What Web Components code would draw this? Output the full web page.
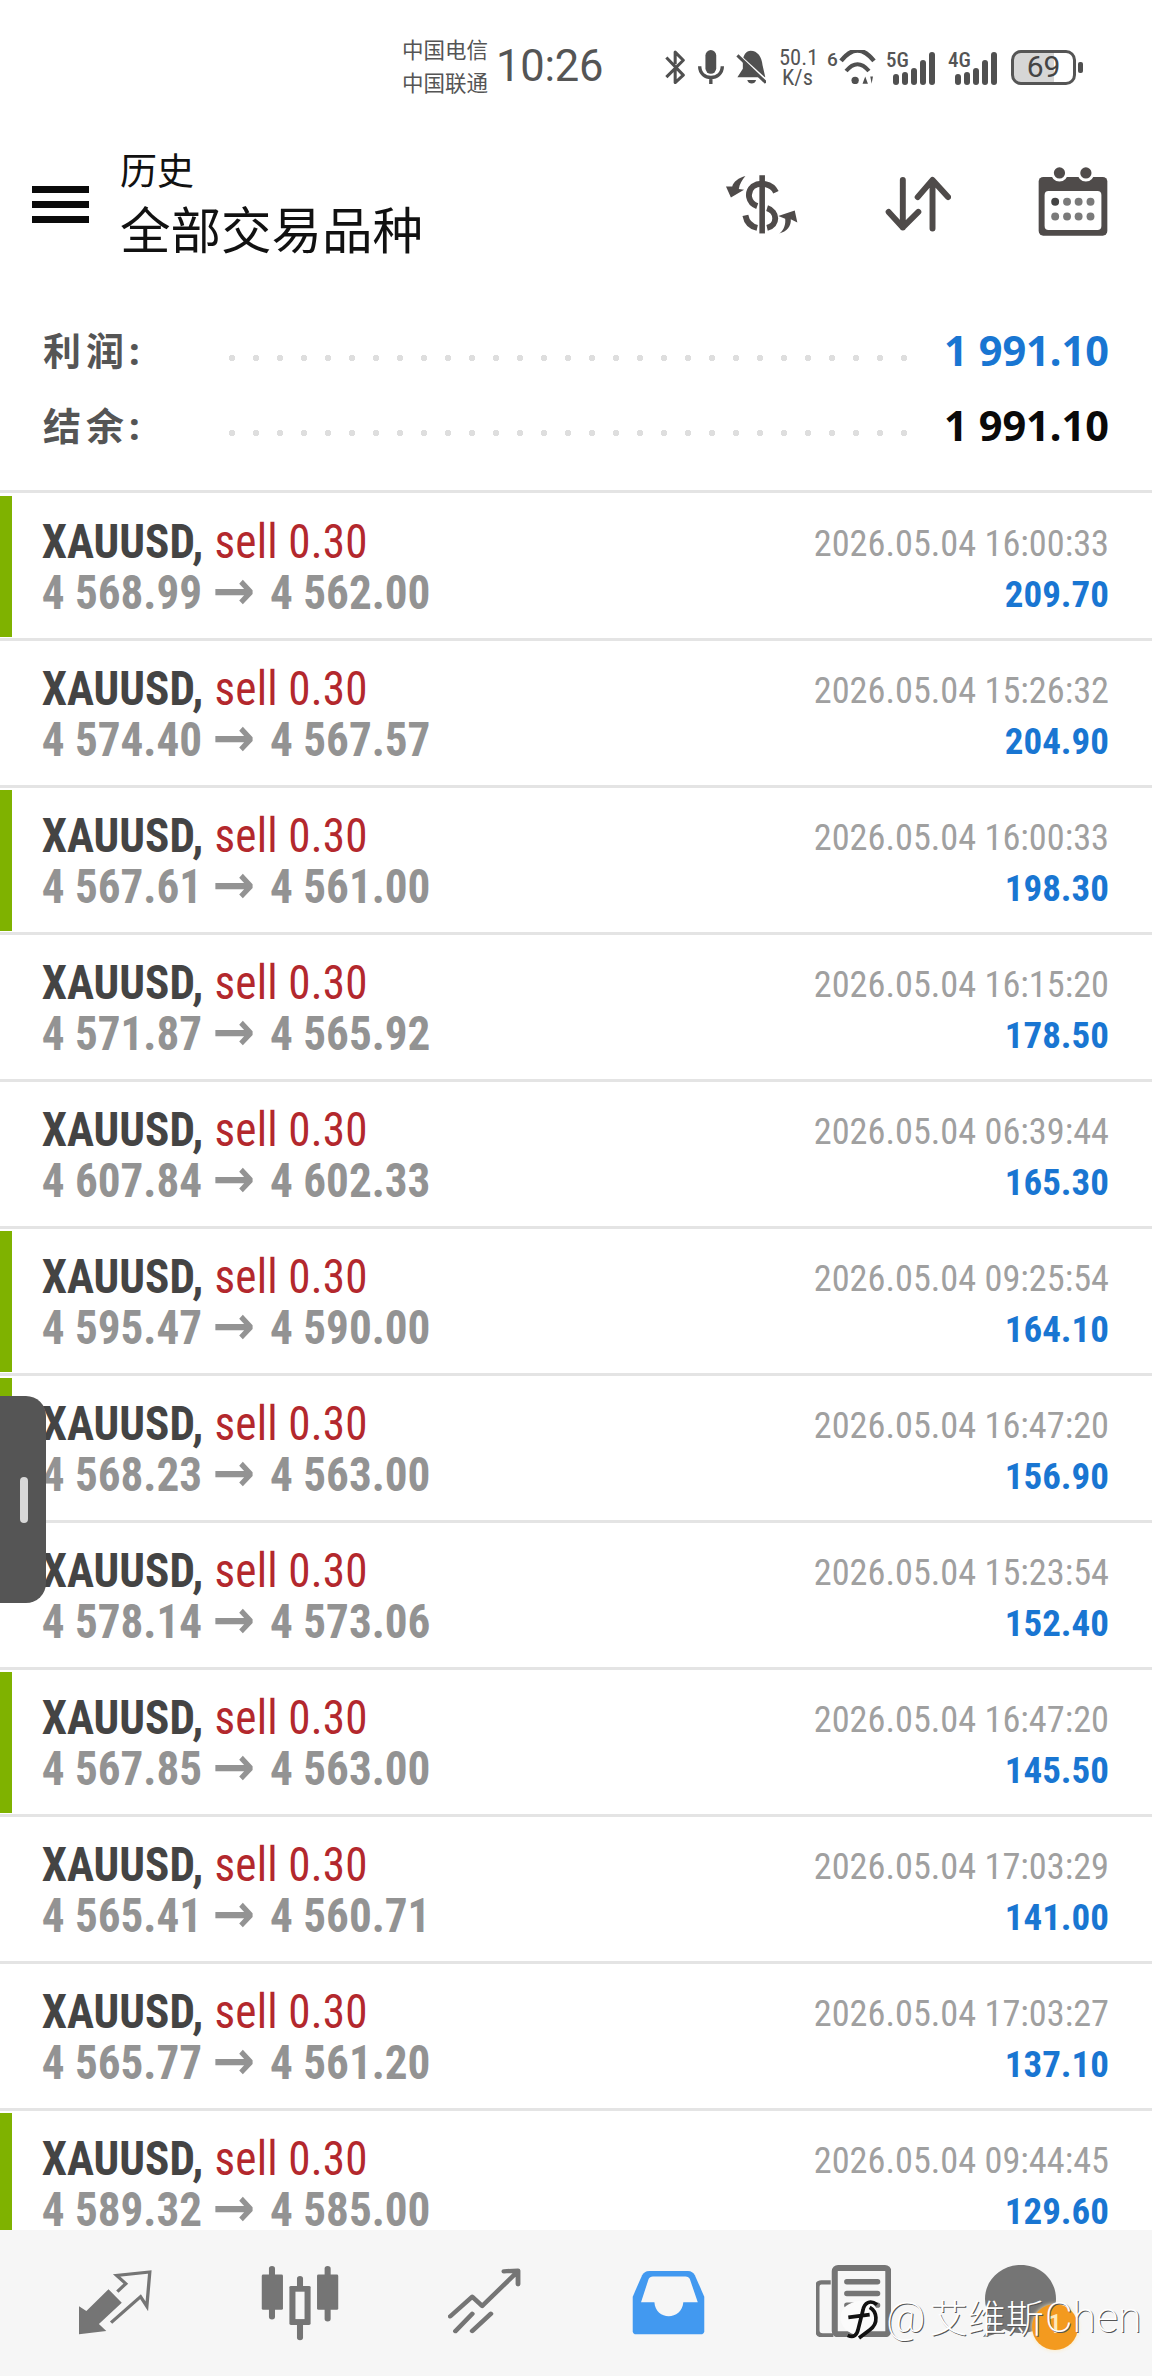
<!DOCTYPE html>
<html>
<head>
<meta charset="utf-8">
<title>历史</title>
<style>
  html, body { margin: 0; padding: 0; background: #fff; }
</style>
</head>
<body>
<history-page>
  <status-bar slot="status"></status-bar>
  <app-header slot="header" kicker="历史" heading="全部交易品种"></app-header>
  <summary-row slot="summary" label="利润:" value="1 991.10" tone="#1976d2"></summary-row>
  <summary-row slot="summary" label="结余:" value="1 991.10" tone="#0a0a0a"></summary-row>
  <trade-row accent open="4 568.99" close="4 562.00" time="2026.05.04 16:00:33" profit="209.70"></trade-row>
  <trade-row open="4 574.40" close="4 567.57" time="2026.05.04 15:26:32" profit="204.90"></trade-row>
  <trade-row accent open="4 567.61" close="4 561.00" time="2026.05.04 16:00:33" profit="198.30"></trade-row>
  <trade-row open="4 571.87" close="4 565.92" time="2026.05.04 16:15:20" profit="178.50"></trade-row>
  <trade-row open="4 607.84" close="4 602.33" time="2026.05.04 06:39:44" profit="165.30"></trade-row>
  <trade-row accent open="4 595.47" close="4 590.00" time="2026.05.04 09:25:54" profit="164.10"></trade-row>
  <trade-row accent open="4 568.23" close="4 563.00" time="2026.05.04 16:47:20" profit="156.90"></trade-row>
  <trade-row open="4 578.14" close="4 573.06" time="2026.05.04 15:23:54" profit="152.40"></trade-row>
  <trade-row accent open="4 567.85" close="4 563.00" time="2026.05.04 16:47:20" profit="145.50"></trade-row>
  <trade-row open="4 565.41" close="4 560.71" time="2026.05.04 17:03:29" profit="141.00"></trade-row>
  <trade-row open="4 565.77" close="4 561.20" time="2026.05.04 17:03:27" profit="137.10"></trade-row>
  <trade-row accent open="4 589.32" close="4 585.00" time="2026.05.04 09:44:45" profit="129.60"></trade-row>
  <bottom-nav slot="nav"></bottom-nav>
</history-page>

<script>
class HistoryPage extends HTMLElement {
  constructor() {
    super();
    this.attachShadow({ mode: "open" });
    this.shadowRoot.innerHTML = `
      <style>
        :host { display: flex; flex-direction: column; position: relative; width: 1152px; height: 2376px; overflow: hidden; background: #fff; }
        .summary { display: flex; flex-direction: column; gap: 35px; height: 170px; padding-top: 10px; box-sizing: border-box; }
        .list { flex: 1; min-height: 0; overflow: hidden; border-top: 3px solid #e4e4e4; padding-top: 1px; }
        .handle { position: absolute; left: 0; top: 1396px; width: 46px; height: 207px; background: #555; border-radius: 0 20px 20px 0; }
        .handle i { position: absolute; left: 20px; top: 81px; width: 8px; height: 46px; border-radius: 4px; background: #d8d8d8; }
        .mark { position: absolute; left: 835px; top: 2292px; display: flex; align-items: center; color: #fff; font: 200 43px/50px Roboto, "Noto Sans CJK SC", sans-serif; text-shadow: 1px 1px 0 #555; white-space: nowrap; }
        .mark svg { display: block; width: 46px; height: 52px; margin-right: 5px; }
        .mark .cn { font-size: 38px; font-weight: 300; margin: 0 1px 0 4px; }
      </style>
      <slot name="status"></slot>
      <slot name="header"></slot>
      <div class="summary"><slot name="summary"></slot></div>
      <div class="list"><slot></slot></div>
      <slot name="nav"></slot>
      <div class="handle"><i></i></div>
      <div class="mark">
        <svg viewBox="100 115 138 130">
          <path d="M185 128C218 128 232 155 230 182C226 212 202 226 178 232L166 247L162 230C128 222 112 196 118 168C124 142 152 128 185 128Z" fill="#fbfbfb"/>
          <path d="M226 140C206 124 188 134 184 156L170 212C166 232 156 240 138 232M140 178L204 170M204 148C226 160 232 196 204 216L172 240" fill="none" stroke="#111" stroke-width="11"/>
        </svg>
        <span>@<span class="cn">艾维斯</span>Chen</span>
      </div>
    `;
  }
}

class StatusBar extends HTMLElement {
  constructor() {
    super();
    this.attachShadow({ mode: "open" });
    this.shadowRoot.innerHTML = `
      <style>
        :host { display: flex; align-items: center; height: 134px; box-sizing: border-box; padding: 0 0 0 402px; color: #555; font-family: Roboto, "Noto Sans CJK SC", sans-serif; }
        svg { display: block; flex: none; fill: #505050; }
        .carrier { width: 95px; font-size: 21.5px; line-height: 33px; white-space: nowrap; }
        .time { width: 168px; margin-left: -1px; font-size: 43.5px; line-height: 50px; letter-spacing: -.2px; }
        .speed { margin-left: 13px; width: 37px; font-size: 22.5px; line-height: 20px; text-align: center; font-stretch: 75%; }
        .six { margin-left: 11px; width: 10px; font-size: 19px; line-height: 19px; font-weight: 500; align-self: flex-start; margin-top: 50px; }
        .net { display: flex; align-items: flex-end; height: 36px; }
        .net b { font-size: 21px; font-weight: 500; line-height: 18px; margin-top: 2px; align-self: flex-start; font-stretch: 75%; width: 23px; margin-right: -16px; }
        .bars { display: flex; align-items: flex-end; gap: 3px; }
        .bars i { display: block; width: 6px; border-radius: 3px; background: #505050; }
        .battery { margin-left: 14px; width: 65px; height: 35px; box-sizing: border-box; border: 3.5px solid #555; border-radius: 10px; background: linear-gradient(90deg, #d6d6d6 68%, transparent 68%); display: flex; align-items: center; justify-content: center; color: #444; font-size: 30px; line-height: 28px; }
        .nub { margin-left: 2px; width: 5px; height: 11px; border-radius: 2px; background: #505050; }
      </style>
      <div class="carrier">中国电信<br>中国联通</div>
      <div class="time">10:26</div>
      <svg width="22" height="34" viewBox="15 30 65 100"><path d="M22 52L72 104L48 126V88M48 72V36L72 60L22 110" fill="none" stroke="#505050" stroke-width="9" stroke-linejoin="round"/></svg>
      <svg style="margin-left:12px" width="26" height="34" viewBox="118 30 77 100"><rect x="140" y="30" width="32" height="70" rx="16"/><path d="M123 78C123 122 190 122 190 78M156 108V130" fill="none" stroke="#505050" stroke-width="10"/></svg>
      <svg style="margin-left:12px" width="30" height="34" viewBox="232 30 88 100"><path d="M275 32C295 32 308 50 310 75L318 110H236L252 85V65C252 45 262 32 275 32ZM265 118H291C288 132 268 132 265 118Z"/><path d="M228 36L318 118" stroke="#fff" stroke-width="10"/><path d="M236 46L320 126" stroke="#505050" stroke-width="9"/></svg>
      <div class="speed">50.1<br>K/s</div>
      <div class="six">6</div>
      <svg style="margin-left:2px" width="37" height="34" viewBox="540 30 110 100"><path d="M546 62Q595 0 644 62" fill="none" stroke="#505050" stroke-width="13"/><path d="M561 92Q595 52 629 92" fill="none" stroke="#505050" stroke-width="12"/><circle cx="588" cy="120" r="11"/><path d="M618 108L626 130H610ZM633 108H641L637 130Z"/></svg>
      <div class="net" style="margin-left:10px"><b>5G</b><div class="bars"><i style="height:11px"></i><i style="height:13px"></i><i style="height:17px"></i><i style="height:25px"></i><i style="height:33px"></i></div></div>
      <div class="net" style="margin-left:13px"><b>4G</b><div class="bars"><i style="height:11px"></i><i style="height:13px"></i><i style="height:17px"></i><i style="height:25px"></i><i style="height:33px"></i></div></div>
      <div class="battery">69</div>
      <div class="nub"></div>
    `;
  }
}

class AppHeader extends HTMLElement {
  constructor() {
    super();
    this.attachShadow({ mode: "open" });
  }

  connectedCallback() {
    const kicker = this.getAttribute("kicker") || "";
    const heading = this.getAttribute("heading") || "";
    this.shadowRoot.innerHTML = `
      <style>
        :host { display: flex; align-items: flex-start; height: 186px; box-sizing: border-box; padding: 10px 44px 0 32px; font-family: "Noto Sans CJK SC", sans-serif; color: #111; }
        .menu { width: 57px; margin-top: 42px; display: flex; flex-direction: column; gap: 8px; flex: none; }
        .menu i { display: block; height: 7px; background: #0a0a0a; }
        .titles { margin-left: 31px; flex: 1; }
        .kicker { font-size: 37px; line-height: 51px; }
        .heading { font-size: 50.5px; line-height: 64px; }
        svg { display: block; flex: none; }
      </style>
      <div class="menu"><i></i><i></i><i></i></div>
      <div class="titles">
        <div class="kicker">${kicker}</div>
        <div class="heading">${heading}</div>
      </div>
      <svg style="margin-top:31px" width="73" height="59" viewBox="30 28 222 178">
        <path d="M143 28V205" stroke="#4f4b4a" stroke-width="17" fill="none"/>
        <path d="M185 80C172 52 135 48 115 62C95 80 100 112 128 122M158 128C190 138 192 180 158 188M92 150C96 172 110 184 128 188" stroke="#4f4b4a" stroke-width="18" fill="none"/>
        <path d="M92 30C72 35 55 48 52 62L33 62L48 96L88 72L72 70C74 55 82 42 92 30Z" fill="#4f4b4a"/>
        <path d="M195 205C210 195 215 175 213 160L192 152L242 135L250 172L230 162C232 182 218 200 195 205Z" fill="#4f4b4a"/>
      </svg>
      <svg style="margin-left:87px;margin-top:31px" width="66" height="58" viewBox="614 108 200 166">
        <path d="M668 118V262M625 215L668 262L715 215M758 265V120M713 170L758 118L805 170" stroke="#4f4b4a" stroke-width="18" stroke-linecap="round" stroke-linejoin="round" fill="none"/>
      </svg>
      <svg style="margin-left:87px;margin-top:23px" width="70" height="70" viewBox="1072 82 212 212">
        <rect x="1074" y="112" width="208" height="178" rx="14" fill="#4f4b4a"/>
        <rect x="1092" y="155" width="172" height="118" rx="12" fill="#fff"/>
        <circle cx="1137" cy="100" r="26" fill="#fff"/><circle cx="1217" cy="100" r="26" fill="#fff"/>
        <circle cx="1137" cy="100" r="17" fill="#4f4b4a"/><circle cx="1217" cy="100" r="17" fill="#4f4b4a"/>
        <g fill="#7a7a7a">
          <circle cx="1124" cy="187" r="12" fill="#444"/><circle cx="1160" cy="187" r="12"/><circle cx="1195" cy="187" r="12"/><circle cx="1231" cy="187" r="12"/>
          <circle cx="1124" cy="232" r="12"/><circle cx="1160" cy="232" r="12"/><circle cx="1195" cy="232" r="12"/><circle cx="1231" cy="232" r="12"/>
        </g>
      </svg>
    `;
  }
}

class SummaryRow extends HTMLElement {
  constructor() {
    super();
    this.attachShadow({ mode: "open" });
  }

  connectedCallback() {
    const label = this.getAttribute("label") || "";
    const value = this.getAttribute("value") || "";
    const tone = this.getAttribute("tone") || "#000";
    this.shadowRoot.innerHTML = `
      <style>
        :host { display: flex; align-items: center; height: 40px; padding: 0 43px; font-family: "Noto Sans", "Noto Sans CJK SC", sans-serif; }
        .label { width: 186px; flex: none; font-size: 38px; line-height: 42px; letter-spacing: 5px; font-weight: 700; color: #555; white-space: nowrap; }
        .dots { width: 678px; height: 8px; margin-top: 16px; background: radial-gradient(circle at 3px 4px, #dedede 3px, transparent 3.5px) 0 0 / 24px 8px repeat-x; }
        .value { margin-left: auto; margin-top: -1px; font-size: 41.5px; line-height: 40px; font-weight: 700; color: ${tone}; white-space: nowrap; }
      </style>
      <div class="label">${label}</div>
      <div class="dots"></div>
      <div class="value">${value}</div>
    `;
  }
}

class TradeRow extends HTMLElement {
  constructor() {
    super();
    this.attachShadow({ mode: "open" });
  }

  connectedCallback() {
    const open = this.getAttribute("open") || "";
    const close = this.getAttribute("close") || "";
    const time = this.getAttribute("time") || "";
    const profit = this.getAttribute("profit") || "";
    const bar = this.hasAttribute("accent") ? "#7fb200" : "transparent";
    this.shadowRoot.innerHTML = `
      <style>
        :host { display: flex; height: 147px; box-sizing: border-box; border-bottom: 3px solid #e4e4e4; font-family: Roboto, sans-serif; font-stretch: 75%; white-space: nowrap; }
        .bar { width: 12px; margin: 2px 0 1px; background: ${bar}; flex: none; }
        .main { padding: 22px 0 0 29px; flex: 1; font-size: 48px; line-height: 51px; transform: scaleX(.94); transform-origin: 41px 0; }
        .pair { color: #444; font-weight: 700; }
        .side { color: #b3282d; font-weight: 400; margin-left: 1px; letter-spacing: .2px; }
        .prices { color: #939393; font-weight: 700; }
        .arrow { font-family: "DejaVu Sans", sans-serif; font-size: 54px; line-height: 40px; font-stretch: 100%; margin: 0 5px 0 0; }
        .side-col { padding: 25px 43px 0 0; text-align: right; }
        .time { color: #a0a0a0; font-size: 36.3px; line-height: 50px; }
        .profit { color: #1976d2; font-size: 37px; line-height: 52px; font-weight: 700; }
      </style>
      <div class="bar"></div>
      <div class="main">
        <div><span class="pair">XAUUSD,</span> <span class="side">sell 0.30</span></div>
        <div class="prices">${open} <span class="arrow">→</span> ${close}</div>
      </div>
      <div class="side-col">
        <div class="time">${time}</div>
        <div class="profit">${profit}</div>
      </div>
    `;
  }
}

class BottomNav extends HTMLElement {
  constructor() {
    super();
    this.attachShadow({ mode: "open" });
    this.shadowRoot.innerHTML = `
      <style>
        :host { display: flex; align-items: flex-start; flex: none; height: 146px; box-sizing: border-box; padding: 35px 0 0 79px; background: #f6f6f6; }
        svg { display: block; flex: none; }
        .chat { position: relative; margin-left: 92px; width: 96px; height: 80px; }
        .badge { position: absolute; left: 49px; top: 39px; width: 46px; height: 46px; border-radius: 50%; background: #f39a1f; box-shadow: 0 0 4px #ffe7b5; color: #ffe9b8; font: 500 26px/40px Roboto, sans-serif; text-align: center; }
      </style>
      <svg style="margin-top:5px" width="73" height="65" viewBox="218 272 198 190" preserveAspectRatio="none">
        <path d="M218 378V460L292 450L272 430L334 368L298 328L238 392Z" fill="#757575"/>
        <path d="M305 426L385 350L402 378L410 278L320 288L345 312L322 335" fill="none" stroke="#757575" stroke-width="9"/>
      </svg>
      <svg style="margin-left:109px" width="78" height="76" viewBox="712 255 206 222" preserveAspectRatio="none">
        <g fill="#757575">
          <rect x="714" y="283" width="56" height="103" rx="4"/><rect x="733" y="258" width="16" height="156" rx="8"/>
          <rect x="860" y="283" width="56" height="103" rx="4"/><rect x="880" y="258" width="16" height="162" rx="8"/>
          <rect x="807" y="287" width="16" height="188" rx="8"/><rect x="787" y="316" width="56" height="114" rx="4"/>
        </g>
        <rect x="803" y="333" width="24" height="80" fill="#f6f6f6"/>
      </svg>
      <svg style="margin-left:109px;margin-top:3px" width="73" height="67" viewBox="1220 262 196 205" preserveAspectRatio="none">
        <path d="M1226 410L1285 350L1312 378L1405 275M1370 272L1408 270V312M1240 455L1285 402M1285 455L1335 402" fill="none" stroke="#757575" stroke-width="13" stroke-linecap="round" stroke-linejoin="round"/>
      </svg>
      <svg style="margin-left:111px;margin-top:5px" width="73" height="65" viewBox="150 262 202 202" preserveAspectRatio="none">
        <path d="M198 265H305C314 265 320 270 324 278L350 345V452C350 458 346 462 340 462H162C156 462 152 458 152 452V345L178 278C182 270 188 265 198 265Z" fill="#4299f0"/>
        <path d="M208 282H298C304 282 308 285 310 290L332 362H292C288 420 215 420 212 362H175L196 290C198 285 202 282 208 282Z" fill="#f6f6f6"/>
      </svg>
      <svg style="margin-left:111px" width="75" height="72" viewBox="48 30 224 215" preserveAspectRatio="none">
        <path d="M92 82H64Q52 82 52 95V225Q52 240 68 240H100" fill="none" stroke="#757575" stroke-width="13"/>
        <rect x="104" y="39" width="160" height="198" rx="10" fill="#f7f7f7" stroke="#757575" stroke-width="18"/>
        <path d="M140 80H232M140 115H232M140 150H232" stroke="#757575" stroke-width="16" stroke-linecap="round"/>
      </svg>
      <div class="chat">
        <svg width="73" height="72" viewBox="0 0 73 72"><path d="M38 0C58 0 73 15 73 34C73 53 58 68 38 68C32 68 26 67 21 64C14 69 7 71 0 72C5 66 8 60 8 53C4 47 2 41 2 34C2 15 18 0 38 0Z" fill="#757575"/></svg>
        <div class="badge">1</div>
      </div>
    `;
  }
}

customElements.define("history-page", HistoryPage);
customElements.define("status-bar", StatusBar);
customElements.define("app-header", AppHeader);
customElements.define("summary-row", SummaryRow);
customElements.define("trade-row", TradeRow);
customElements.define("bottom-nav", BottomNav);
</script>
</body>
</html>
